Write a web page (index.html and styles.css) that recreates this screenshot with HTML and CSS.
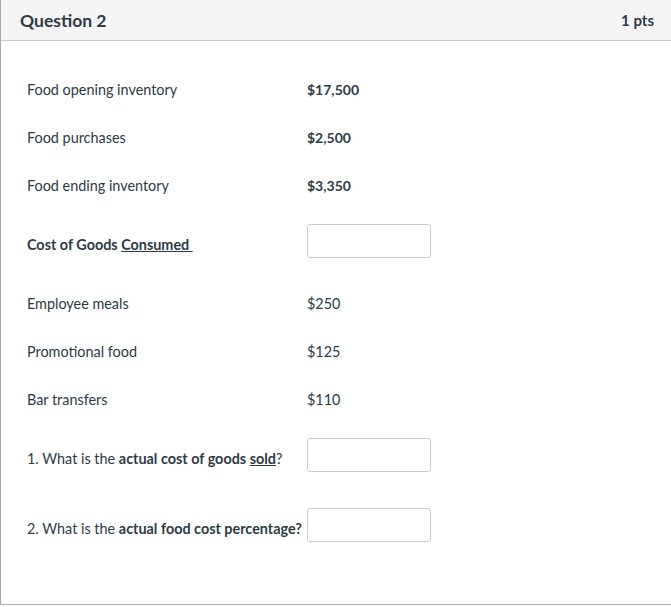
FILE: index.html
```html
<!DOCTYPE html>
<html>
<head>
<meta charset="utf-8">
<link rel="stylesheet" href="styles.css">
</head>
<body>
<div class="question">
  <div class="header">
    <span class="title">Question 2</span>
    <span class="pts">1 pts</span>
  </div>
  <div class="content">
    <div class="row"><span class="label">Food opening inventory</span><span class="value bold">$17,500</span></div>
    <div class="row"><span class="label">Food purchases</span><span class="value bold">$2,500</span></div>
    <div class="row"><span class="label">Food ending inventory</span><span class="value bold">$3,350</span></div>
    <div class="row tall"><span class="label bold">Cost of Goods <u>Consumed&nbsp;</u></span><span class="field"></span></div>
    <div class="row"><span class="label">Employee meals</span><span class="value">$250</span></div>
    <div class="row"><span class="label">Promotional food</span><span class="value">$125</span></div>
    <div class="row"><span class="label">Bar transfers</span><span class="value">$110</span></div>
    <div class="row tall"><span class="label">1. What is the <b>actual cost of goods <u>sold</u></b>?</span><span class="field"></span></div>
    <div class="row tall"><span class="label">2. What is the <b>actual food cost percentage?</b></span><span class="field"></span></div>
  </div>
</div>
</body>
</html>
```
FILE: styles.css
```css
html, body {
  margin: 0;
  padding: 0;
  background: #fff;
}
body {
  font-family: Lato, "Open Sans", sans-serif;
  color: #2d3b45;
}
.question {
  width: 672px;
  height: 605px;
  border-left: 1px solid #a9a9a9;
  border-bottom: 1px solid #a9a9a9;
  box-sizing: border-box;
  display: flex;
  flex-direction: column;
}
.header {
  height: 41px;
  box-sizing: border-box;
  background: #f5f5f5;
  border-bottom: 1px solid #c7cdd1;
  display: flex;
  align-items: center;
  justify-content: space-between;
  padding: 0 18px 0 19px;
}
.title {
  font-size: 17.5px;
  font-weight: 700;
  color: #2d3b45;
}
.pts {
  font-size: 15px;
  font-weight: 700;
  color: #2d3b45;
}
.content {
  padding: 24px 0 0 26px;
  display: flex;
  flex-direction: column;
}
.row {
  height: 48px;
  display: flex;
  align-items: center;
  font-size: 14.4px;
}
.row.tall {
  height: 70px;
}
.label {
  width: 280px;
}
.bold, b {
  font-weight: 700;
}
.value.bold {
  font-size: 14px;
}
.field {
  width: 124px;
  height: 34px;
  box-sizing: border-box;
  border: 1px solid #c7cdd1;
  border-radius: 3px;
  background: #fff;
  margin-top: -7px;
}
```
